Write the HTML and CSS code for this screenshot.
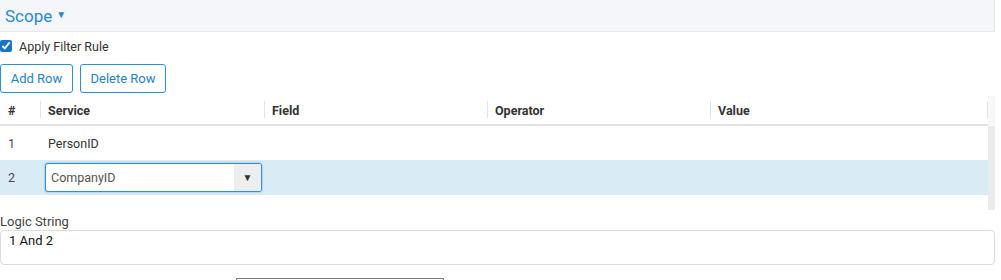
FILE: index.html
```html
<!DOCTYPE html>
<html>
<head>
    <title>Scope</title>
    <meta charset="utf-8">
    <link rel="stylesheet" href="styles.css">
</head>
<body>
    <div class="panel-head">
        <span class="panel-title">Scope</span><span class="caret">&#9660;</span>
    </div>

    <label class="apply">
        <input type="checkbox" checked>
        <span>Apply Filter Rule</span>
    </label>

    <div class="toolbar">
        <button type="button" class="btn btn-add">Add Row</button>
        <button type="button" class="btn btn-del">Delete Row</button>
    </div>

    <div class="grid-wrap">
        <div class="grid">
            <div class="grid-row grid-header">
                <div class="cell c-num">#</div>
                <div class="cell c-svc">Service</div>
                <div class="cell c-col">Field</div>
                <div class="cell c-col">Operator</div>
                <div class="cell c-val">Value</div>
            </div>
            <div class="grid-row">
                <div class="cell c-num num">1</div>
                <div class="cell c-svc">PersonID</div>
                <div class="cell c-col"></div>
                <div class="cell c-col"></div>
                <div class="cell c-val"></div>
            </div>
            <div class="grid-row selected">
                <div class="cell c-num num">2</div>
                <div class="cell c-svc edit">
                    <div class="combo">
                        <span class="combo-text">CompanyID</span>
                        <span class="combo-arrow">&#9660;</span>
                    </div>
                </div>
                <div class="cell c-col"></div>
                <div class="cell c-col"></div>
                <div class="cell c-val"></div>
            </div>
        </div>
        <div class="scroll">
            <div class="scroll-head"></div>
            <div class="scroll-track"></div>
        </div>
    </div>

    <div class="logic-label">Logic String</div>
    <div class="logic-box">1 And 2</div>

    <div class="bottom">
        <div class="bottom-tab"></div>
    </div>
</body>
</html>
```

FILE: styles.css
```css
html, body {
    margin: 0;
    height: 280px;
    overflow: hidden;
}

body {
    font-family: Roboto, "Liberation Sans", Arial, sans-serif;
    color: #333;
    background: #fff;
    width: 1001px;
}

.panel-head {
    width: 989px;
    height: 31px;
    padding-left: 5px;
    background-color: #f5f6fa;
    border-bottom: 1px solid #e4e7ec;
    border-right: 1px solid #e4e7ec;
    display: flex;
    align-items: center;
}

.panel-title {
    font-size: 17px;
    color: #2a88d2;
}

.caret {
    font-size: 10px;
    color: #2a88d2;
    margin-left: 4px;
    position: relative;
    top: -1px;
}

.apply {
    display: flex;
    align-items: center;
    height: 12px;
    margin-top: 8px;
    font-size: 12.5px;
    color: #333;
}

.apply input {
    margin: 0 7px 0 0;
    width: 12px;
    height: 12px;
    accent-color: #1576c9;
}

.toolbar {
    display: flex;
    gap: 7px;
    margin-top: 12px;
}

.btn {
    font-family: Roboto, "Liberation Sans", Arial, sans-serif;
    font-size: 13px;
    color: #1f82c8;
    background: #fff;
    border: 1px solid #2a8fd6;
    border-radius: 3px;
    height: 29px;
    padding: 0;
}

.btn-add { width: 73px; }
.btn-del { width: 86px; }

.grid-wrap {
    display: flex;
    width: 995px;
    margin-top: 3px;
}

.grid {
    width: 988px;
}

.grid-row {
    display: flex;
    height: 34px;
    align-items: center;
    font-size: 12.5px;
}

.grid-header {
    height: 28px;
    font-weight: bold;
    color: #333;
    border-bottom: 2px solid #e2e2e2;
}

.cell {
    height: 100%;
    display: flex;
    align-items: center;
    padding-left: 8px;
    box-sizing: border-box;
}

.c-num { width: 40px; }
.c-svc { width: 224px; }
.c-col { width: 223px; }
.c-val { width: 278px; }

.grid-header .cell {
    position: relative;
}

.grid-header .cell + .cell::before,
.grid-header .c-val::after {
    content: "";
    position: absolute;
    left: 0;
    top: 5px;
    height: 17px;
    border-left: 1px solid #e3e3e3;
}

.grid-header .c-val::after {
    left: auto;
    right: 0;
}

.num { color: #5b3d5b; }

.selected {
    background-color: #d9ebf4;
    height: 35px;
}

.cell.edit {
    padding-left: 5px;
}

.combo {
    width: 217px;
    height: 29px;
    box-sizing: border-box;
    border: 1px solid #2f8fd8;
    border-radius: 3px;
    background: #fff;
    box-shadow: 0 0 2px #5aa9e2;
    display: flex;
    align-items: center;
    overflow: hidden;
}

.combo-text {
    flex: 1;
    padding-left: 5px;
    color: #555;
    font-size: 12.5px;
}

.combo-arrow {
    width: 27px;
    height: 100%;
    background: #eeeeee;
    display: flex;
    align-items: center;
    justify-content: center;
    font-size: 10px;
    color: #333;
}

.scroll {
    width: 7px;
    display: flex;
    flex-direction: column;
}

.scroll-head {
    height: 30px;
    background: #f7f8fa;
}

.scroll-track {
    height: 84px;
    background: #ebebeb;
}

.logic-label {
    margin-top: 4px;
    height: 16px;
    line-height: 16px;
    font-size: 13px;
    color: #444;
}

.logic-box {
    width: 995px;
    height: 35px;
    box-sizing: border-box;
    border: 1px solid #dcdcdc;
    border-radius: 4px;
    padding: 2px 8px;
    font-size: 13px;
    color: #111;
}

.bottom {
    margin-top: 13px;
    height: 4px;
    border-bottom: 1px solid #dcdcdc;
    position: relative;
}

.bottom-tab {
    position: absolute;
    left: 236px;
    top: 0;
    width: 206px;
    height: 10px;
    border: 1px solid #777;
    background: #fff;
}
```
